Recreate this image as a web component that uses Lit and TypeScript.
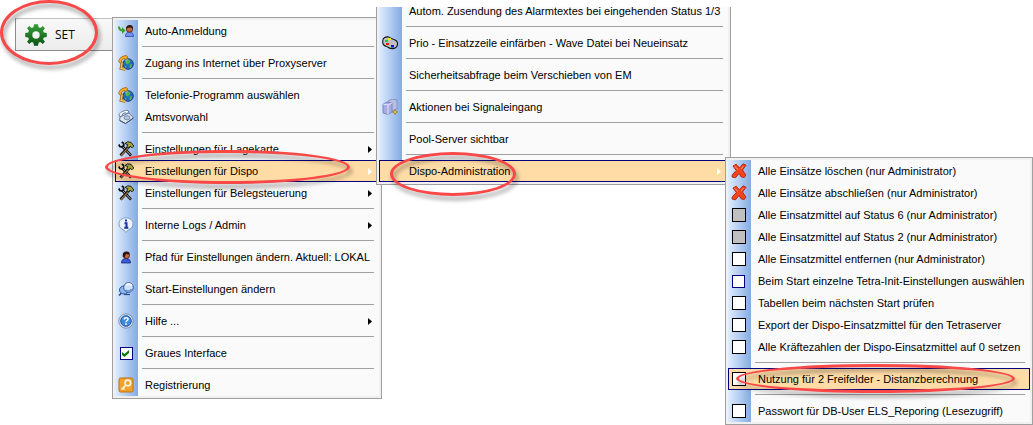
import { LitElement, html, css, svg, nothing, TemplateResult } from "lit";
import { customElement, property } from "lit/decorators.js";
import { classMap } from "lit/directives/class-map.js";

type Entry = {
  label?: string;
  icon?: string;
  check?: "off" | "grey" | "navy" | "on";
  sub?: boolean;
  active?: boolean;
};

const SEP: Entry = {};

const globe = svg`
  <circle cx="10" cy="9" r="5.300" fill="#1c6cc8" stroke="#143a78" stroke-width=".9"/>
  <path d="M7.500 6l2.500-1.500 2.500 1-1 2.500-2 1.500-2-1zM11.500 9.500l2.500-.5-.5 3-2 1.500zM6.500 10.500l2 1-.5 2z" fill="#54b545"/>
  <path d="M7.500 5.500l2-1" stroke="#c9ecff"/>
  <path d="M.8 6.500C.8 3.500 4 .8 8.500 .6l1 1.200-.3 2-2 .6-1.200-.9C5 3.800 4 4.600 3.500 5.600l.2 1.400-1.600 1.200z" fill="#f6b22c" stroke="#9c5a06" stroke-width=".8"/>
  <path d="M4.200 7.500L3 13.500l4.500 1" fill="none" stroke="#8a5a14" stroke-width="2.800"/>
  <path d="M4.200 7.500L3 13.500l4.500 1" fill="none" stroke="#f4c660" stroke-width="1.300"/>`;

const tools = svg`
  <path d="M4 5l9 9.500" stroke="#111" stroke-width="2.600"/>
  <path d="M5 6l7.500 8" stroke="#d8d8d8" stroke-width=".8"/>
  <path d="M.8 3.500l1 2 2.500.5 1.500-1.500-.3-2.300L3.800 1" fill="none" stroke="#111" stroke-width="1.700"/>
  <path d="M11 5.500L2.500 14.500" stroke="#111" stroke-width="2.800"/>
  <path d="M10.500 6.500l-7.500 8" stroke="#a8763a" stroke-width="1.100"/>
  <path d="M7 2.500l2.500-1.700 3.500.5L15.800 5l-1.800 1.800-2-1.600L10.500 7 8.800 5.200l1-1.500z" fill="#a4a43a" stroke="#111" stroke-width=".9"/>`;

const cross = svg`
  <path d="M2 3l3.200-1.800L8.500 5 12 .8l3 1.400L11.500 7l3.300 5-1.500 2.500-3-.5L8 10.500l-3.500 4.300L1 14l.3-2.300L5.300 7.500z" fill="#f5431d" stroke="#b5200a" stroke-width=".9"/>
  <path d="M3.500 3.200L7 6.500M12.500 3L10 6" stroke="#ff9a72" stroke-width="1"/>`;

const ICONS: Record<string, TemplateResult> = {
  login: svg`
    <path d="M1 3.500c0 3 1.500 4 4 4" fill="none" stroke="#3aa02c" stroke-width="2"/>
    <path d="M4 4l3.500 3.500L4 11z" fill="#3aa02c"/>
    <path d="M7.500 13.500c0-3 1.500-4.500 4-4.500s4 1.500 4 4.500z" fill="#6f92ee" stroke="#2a48b0" stroke-width=".8"/>
    <circle cx="11.500" cy="6" r="3.200" fill="#c8683c" stroke="#4a1c10" stroke-width=".8"/>
    <path d="M8.300 6C8 3 9.500 2 12 2s3.300 2 3 4l-2-1.500-3 .2z" fill="#2c1a1a"/>`,
  globe,
  phone: svg`
    <path d="M2 8l9-4 4.500 5-8 5.500-6-3z" fill="#dfe7f3" stroke="#5d7090" stroke-width=".9"/>
    <path d="M1 5.500C2 3 7 .8 10 1.500l1 2-2.500 1-1.500-.8-2.500 1.200-.3 1.800L2 8z" fill="#f4f7fc" stroke="#5d7090" stroke-width=".9"/>
    <ellipse cx="9" cy="8.800" rx="3" ry="2.100" fill="#b4c4dc" stroke="#5d7090" stroke-width=".7"/>
    <path d="M2 11.500l5.500 3 8-5.500" fill="none" stroke="#3f5070"/>`,
  tools,
  info: svg`
    <path d="M8 .8c4 0 7 2.500 7 6s-2.500 5.400-4.500 5.900L8 15.500l-2.500-2.800C3.500 12.200 1 10.300 1 6.800s3-6 7-6z" fill="#eaf3fd" stroke="#7e9cc0"/>
    <path d="M8 2.500v2M6.500 6.200H8.500V10.500M6.300 10.700h4" fill="none" stroke="#1c2fa0" stroke-width="2"/>`,
  user: svg`
    <path d="M3.500 14c0-3 1.500-4.500 4.500-4.500s4.500 1.500 4.500 4.500z" fill="#3a5cd0" stroke="#1a2c80" stroke-width=".8"/>
    <circle cx="8.500" cy="6.500" r="3" fill="#d2653a" stroke="#3c140c" stroke-width=".8"/>
    <path d="M4.800 8C4.300 4 5.500 2.500 8.500 2.500S12 4.500 11.500 5.500L8 5l-1.500 3.500z" fill="#2a1414"/>`,
  pin: svg`
    <path d="M5 10.500L1 14.500" stroke="#2a4c8c" stroke-width="1.600"/>
    <ellipse cx="6" cy="9" rx="4.500" ry="4" fill="#8fb6ea" stroke="#2c559c"/>
    <circle cx="10.500" cy="6.500" r="4.800" fill="#cfe2fa" stroke="#2c559c"/>
    <path d="M8 4c2-2 5-1 5.800 1" stroke="#fff" stroke-width="1.500" fill="none"/>
    <path d="M7.500 9c2 1.800 5 1.200 6-1" stroke="#5c8bd0" stroke-width="1.500" fill="none"/>
    <path d="M6 13.500h6" stroke="#2c559c" stroke-width="1.300"/>`,
  help: svg`
    <circle cx="8" cy="8" r="7.200" fill="#dce6f2" stroke="#7f93ae"/>
    <circle cx="8" cy="8" r="5.300" fill="#3f8ae0" stroke="#1c56a8"/>
    <path d="M6.200 6.500c0-2.500 3.800-2.300 3.800-.2C10 7.800 8 7.700 8 9.300M8 10.300v1.600" fill="none" stroke="#fff" stroke-width="1.500"/>`,
  key: svg`
    <rect x="1" y="1" width="14" height="14" rx="1.500" fill="#f0a22a" stroke="#c06f10"/>
    <circle cx="9.800" cy="6" r="2.800" fill="none" stroke="#fff6dc" stroke-width="1.700"/>
    <path d="M8 8l-4.500 4.500M5 11l1.500 1.500" stroke="#fff6dc" stroke-width="1.700"/>`,
  palette: svg`
    <path d="M.8 5.500c0-3 3-4 6-3.500 1.500 1 2.500 1.700 4.500 2.200 3 .8 4.500 2.800 4.200 5.500-.5 3-3.500 4.300-6.500 3.800-2.500-.3-3-1.800-5-2.300C1.500 10.500 .4 8 .8 5.500z" fill="#c0c0c0" stroke="#111" stroke-width="1.100"/>
    <path d="M3 5h3v2H3z" fill="#1fd01f"/><path d="M6 3h3v2H6z" fill="#f5e820"/>
    <path d="M4 8h3v2H4z" fill="#e01818"/><path d="M9 10h3v2.500H9z" fill="#1414e0"/>`,
  servers: svg`
    <path d="M6 2l4-2 5 1v9l-4 2-5-1z" fill="#b8bde4" stroke="#8188bd" stroke-width=".8"/>
    <path d="M1 5l4-2 5 1v9l-4 2.500-5-1.500z" fill="#a6ade0" stroke="#7079b4" stroke-width=".8"/>
    <path d="M1 5l5 1v9.500M6 6l4-2" fill="none" stroke="#e8ebfb" stroke-width=".9"/>
    <path d="M13 10.500v5M10.500 13h5" stroke="#8b7a3e" stroke-width="2"/>
    <path d="M13 11.500v3M11.500 13h3" stroke="#f2cf4a" stroke-width="1"/>`,
  cross,
};

const MAIN: Entry[] = [
  { label: "Auto-Anmeldung", icon: "login" },
  SEP,
  { label: "Zugang ins Internet über Proxyserver", icon: "globe" },
  SEP,
  { label: "Telefonie-Programm auswählen", icon: "globe" },
  { label: "Amtsvorwahl", icon: "phone" },
  SEP,
  { label: "Einstellungen für Lagekarte", icon: "tools", sub: true },
  { label: "Einstellungen für Dispo", icon: "tools", sub: true, active: true },
  { label: "Einstellungen für Belegsteuerung", icon: "tools", sub: true },
  SEP,
  { label: "Interne Logs / Admin", icon: "info", sub: true },
  SEP,
  { label: "Pfad für Einstellungen ändern. Aktuell: LOKAL", icon: "user" },
  SEP,
  { label: "Start-Einstellungen ändern", icon: "pin" },
  SEP,
  { label: "Hilfe ...", icon: "help", sub: true },
  SEP,
  { label: "Graues Interface", check: "on" },
  SEP,
  { label: "Registrierung", icon: "key" },
];

const DISPO: Entry[] = [
  { label: "Autom. Zusendung des Alarmtextes bei eingehenden Status 1/3" },
  SEP,
  { label: "Prio - Einsatzzeile einfärben - Wave Datei bei Neueinsatz", icon: "palette" },
  SEP,
  { label: "Sicherheitsabfrage beim Verschieben von EM" },
  SEP,
  { label: "Aktionen bei Signaleingang", icon: "servers" },
  SEP,
  { label: "Pool-Server sichtbar" },
  SEP,
  { label: "Dispo-Administration", sub: true, active: true },
];

const ADMIN: Entry[] = [
  { label: "Alle Einsätze löschen (nur Administrator)", icon: "cross" },
  { label: "Alle Einsätze abschließen (nur Administrator)", icon: "cross" },
  { label: "Alle Einsatzmittel auf Status 6 (nur Administrator)", check: "grey" },
  { label: "Alle Einsatzmittel auf Status 2 (nur Administrator)", check: "grey" },
  { label: "Alle Einsatzmittel entfernen (nur Administrator)", check: "off" },
  { label: "Beim Start einzelne Tetra-Init-Einstellungen auswählen", check: "navy" },
  { label: "Tabellen beim nächsten Start prüfen", check: "off" },
  { label: "Export der Dispo-Einsatzmittel für den Tetraserver", check: "off" },
  { label: "Alle Kräftezahlen der Dispo-Einsatzmittel auf 0 setzen", check: "off" },
  SEP,
  { label: "Nutzung für 2 Freifelder - Distanzberechnung", check: "off", active: true },
  SEP,
  { label: "Passwort für DB-User ELS_Reporing (Lesezugriff)", check: "off" },
];

@customElement("popup-menu")
export class PopupMenu extends LitElement {
  @property({ attribute: false }) entries: Entry[] = [];

  static styles = css`
    :host {
      display: block;
      box-sizing: border-box;
      border: 1px solid #a0a0a0;
      padding: 2px;
      background: #f0f0f0;
      font: 11px/22px "Liberation Sans", Arial, sans-serif;
      color: #000;
    }
    ul {
      list-style: none;
      margin: 0;
      padding: 0;
      background: linear-gradient(90deg, #e0edff, #84abe3) 0 0 / 23px 100% no-repeat #fafafa;
    }
    .sep {
      height: 10px;
      padding: 4px 5px 0 27px;
      box-sizing: border-box;
    }
    .sep::before {
      content: "";
      display: block;
      height: 1px;
      background: #a0a0a0;
    }
    .row {
      box-sizing: border-box;
      display: grid;
      grid-template-columns: 23px 1fr 5px;
      align-items: center;
      width: 100%;
      height: 22px;
      margin: 0;
      padding: 0 6px 0 0;
      border: 0;
      background: none;
      font: inherit;
      color: inherit;
      text-align: left;
      white-space: nowrap;
    }
    .active {
      background: #ffdca6;
      box-shadow: inset 0 0 0 1px #000080;
    }
    .text {
      padding-left: 7px;
    }
    .slot {
      display: flex;
      padding-left: 3px;
    }
    svg {
      display: block;
    }
    .active .arrow {
      fill: #fff;
    }
    input {
      appearance: none;
      box-sizing: border-box;
      width: 14px;
      height: 14px;
      margin: 0 0 0 1px;
      border: 1px solid #000;
      background: #fff;
    }
    .grey {
      background: #c0c0c0;
    }
    .navy,
    .on {
      width: 13px;
      height: 13px;
      border-color: #000080;
    }
    .slot.ticked {
      display: grid;
      grid-template-columns: 15px;
      place-items: center;
    }
    .ticked > * {
      grid-area: 1 / 1;
    }
  `;

  private slotFor(e: Entry) {
    if (e.check) {
      return html`<span class="slot ${classMap({ ticked: e.check === "on" })}">
        <input type="checkbox" class=${e.check} .checked=${e.check === "on"} />
        ${e.check === "on"
          ? html`<svg width="7" height="7" viewBox="0 0 7 7"><path d="M0 2v3l2.500 2L7 3V0L2.500 4z" fill="#008000" /></svg>`
          : nothing}
      </span>`;
    }
    return html`<span class="slot">
      ${e.icon ? html`<svg width="16" height="16" viewBox="0 0 16 16" aria-hidden="true">${ICONS[e.icon]}</svg>` : nothing}
    </span>`;
  }

  private row(e: Entry) {
    if (!e.label) return html`<li class="sep" role="separator"></li>`;
    const cls = classMap({ row: true, active: !!e.active });
    const body = html`${this.slotFor(e)}<span class="text">${e.label}</span>
      ${e.sub ? html`<svg class="arrow" width="4" height="7" viewBox="0 0 4 7"><path d="M0 0L4 3.500 0 7z" /></svg>` : nothing}`;
    return e.check
      ? html`<li><label class=${cls}>${body}</label></li>`
      : html`<li><button type="button" class=${cls}>${body}</button></li>`;
  }

  render() {
    return html`<ul>${this.entries.map((e) => this.row(e))}</ul>`;
  }
}

@customElement("app-root")
export class AppRoot extends LitElement {
  static styles = css`
    :host {
      display: block;
      position: relative;
      min-height: 100vh;
      overflow: hidden;
      background: #fff;
    }
    .bar {
      padding: 18px 0 0 15px;
    }
    .set {
      display: flex;
      align-items: center;
      gap: 8px;
      box-sizing: border-box;
      width: 120px;
      height: 33px;
      padding: 0 0 0 9px;
      border: 1px solid #8c8c8c;
      border-top-color: #c0c0c0;
      background: linear-gradient(#f9f9f9, #ececec);
      font: 12px/16px "Open Sans", sans-serif;
      color: #000;
    }
    .main,
    .dispo,
    .admin {
      position: absolute;
    }
    .main {
      left: 112px;
      top: 17px;
      width: 270px;
    }
    .dispo {
      left: 376px;
      top: 7px;
      width: 355px;
      height: 178px;
      border-top: 0;
      padding-top: 0;
      overflow: hidden;
      display: flex;
      flex-direction: column;
      justify-content: flex-end;
    }
    .admin {
      left: 725px;
      top: 157px;
      width: 308px;
    }
    .mark {
      position: absolute;
      box-sizing: border-box;
      border: 3px solid #f84848;
      border-radius: 50%;
      filter: drop-shadow(2px 4px 2px rgba(0, 0, 0, 0.4));
      pointer-events: none;
    }
    .m1 {
      left: 0;
      top: 0;
      width: 98px;
      height: 65px;
    }
    .m2 {
      left: 105px;
      top: 150px;
      width: 245px;
      height: 34px;
    }
    .m3 {
      left: 390px;
      top: 152px;
      width: 126px;
      height: 44px;
    }
    .m4 {
      left: 736px;
      top: 364px;
      width: 279px;
      height: 29px;
    }
  `;

  render() {
    return html`
      <div class="bar">
        <button type="button" class="set">
          <svg width="22" height="22" viewBox="-11 -11 22 22" aria-hidden="true">
            <defs>
              <linearGradient id="g" x1="0" y1="0" x2="0" y2="1">
                <stop offset="0" stop-color="#37a03a" />
                <stop offset="1" stop-color="#0b5412" />
              </linearGradient>
            </defs>
            <path
              fill="url(#g)"
              fill-rule="evenodd"
              d="M-2-10.800H2L2.600-7.800 4.200-7.100 6.800-8.900 8.900-6.800 7.100-4.200 7.800-2.600 10.800-2V2L7.800 2.600 7.100 4.200 8.900 6.800 6.800 8.900 4.200 7.100 2.600 7.800 2 10.800H-2L-2.600 7.800-4.200 7.100-6.800 8.900-8.900 6.800-7.100 4.200-7.800 2.600-10.800 2V-2L-7.800-2.600-7.100-4.200-8.900-6.800-6.800-8.900-4.200-7.100-2.600-7.800zM0-3.700A3.700 3.700 0 1 0 0 3.700 3.700 3.700 0 1 0 0-3.700z"
            />
          </svg>
          <span>SET</span>
        </button>
      </div>
      <popup-menu class="main" .entries=${MAIN}></popup-menu>
      <popup-menu class="dispo" .entries=${DISPO}></popup-menu>
      <popup-menu class="admin" .entries=${ADMIN}></popup-menu>
      <span class="mark m1"></span>
      <span class="mark m2"></span>
      <span class="mark m3"></span>
      <span class="mark m4"></span>
    `;
  }
}
